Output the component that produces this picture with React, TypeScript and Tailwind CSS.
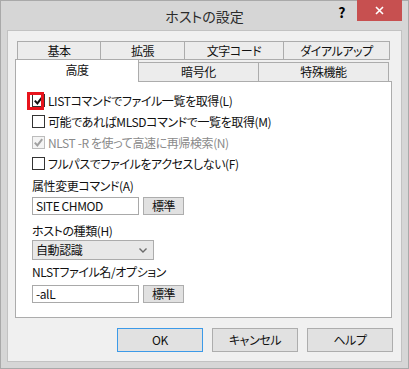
const tabRow1 = [
  { label: "基本", w: "w-[84px]" },
  { label: "拡張", w: "w-[84px]" },
  { label: "文字コード", w: "w-[99px]" },
  { label: "ダイアルアップ", w: "w-[106px]" },
];

function CheckMark({ color }: { color: string }) {
  return (
    <svg width="9" height="9" viewBox="0 0 9 9">
      <path d="M0.8 4.6 L3.4 7.4 L8.2 1.2" fill="none" stroke={color} strokeWidth="2" />
    </svg>
  );
}

interface CheckRowProps {
  label: string;
  checked?: boolean;
  disabled?: boolean;
  highlight?: boolean;
}

function CheckRow({ label, checked, disabled, highlight }: CheckRowProps) {
  return (
    <div className="flex h-[21px] items-center">
      <div
        className={`relative flex h-[13px] w-[13px] items-center justify-center border ${
          disabled ? "border-[#bcbcbc] bg-[#f4f4f4]" : "border-[#333333] bg-white"
        }`}
      >
        {checked && <CheckMark color={disabled ? "#a0a0a0" : "#111111"} />}
        {highlight && (
          <div className="absolute left-[-6px] top-[-3px] h-[18px] w-[17px] border-[3px] border-[#e8141c]" />
        )}
      </div>
      <span className={`ml-[3px] ${disabled ? "text-[#8a8a8a]" : "text-[#111111]"}`}>{label}</span>
    </div>
  );
}

function SmallButton({ label }: { label: string }) {
  return (
    <div className="ml-[4px] flex h-[18px] w-[41px] items-center justify-center border border-[#adadad] bg-[#e1e1e1]">
      {label}
    </div>
  );
}

function DialogButton({ label, primary = false }: { label: string; primary?: boolean }) {
  return (
    <div
      className={`flex h-[24px] w-[86px] items-center justify-center border bg-[#e1e1e1] ${
        primary ? "border-[#3c9ae8]" : "border-[#adadad]"
      }`}
    >
      {label}
    </div>
  );
}

export default function App() {
  return (
    <div className="relative flex h-[369px] w-[409px] flex-col border border-[#a9a9a9] bg-[#d6d6d6] font-['Noto_Sans_CJK_JP','Noto_Sans',sans-serif] text-[12px] leading-[16px] tracking-[-0.4px] text-[#111111] [font-feature-settings:'palt']">
      {/* title bar */}
      <div className="flex h-[29px] items-center justify-center text-[14px] tracking-normal text-[#2b2b2b]">
        ホストの設定
      </div>
      <div className="absolute right-[6px] top-[-1px] flex items-start">
        <span className="mr-[12px] mt-[4px] text-[14px] font-bold text-black">?</span>
        <div className="flex h-[21px] w-[45px] items-center justify-center bg-[#c75050]">
          <svg width="9" height="9" viewBox="0 0 9 9">
            <path d="M1 1 L8 8 M8 1 L1 8" stroke="#ffffff" strokeWidth="1.6" />
          </svg>
        </div>
      </div>

      {/* client area */}
      <div className="mx-[6px] flex h-[332px] flex-col border border-[#c2c2c2] bg-[#f0f0f0] pt-[10px]">
        <div className="ml-[9px] flex h-[19px]">
          {tabRow1.map((t, i) => (
            <div
              key={t.label}
              className={`flex ${t.w} items-center justify-center border-y border-r border-[#acacac] bg-[#ececec] ${
                i === 0 ? "border-l" : ""
              }`}
            >
              {t.label}
            </div>
          ))}
        </div>
        <div className="-mt-px flex h-[22px] items-end">
          <div className="relative z-10 -mb-px ml-[7px] flex h-[23px] w-[124px] justify-center border-x border-t border-[#acacac] bg-white pt-[2px]">
            高度
          </div>
          <div className="flex h-[19px] w-[120px] items-center justify-center border-r border-t border-[#acacac] bg-[#ececec]">
            暗号化
          </div>
          <div className="flex h-[19px] w-[130px] items-center justify-center border-r border-t border-[#acacac] bg-[#ececec]">
            特殊機能
          </div>
        </div>

        {/* tab page */}
        <div className="ml-[7px] flex h-[237px] w-[377px] flex-col border border-[#acacac] bg-white pl-[16px] pt-[8px]">
          <CheckRow label="LISTコマンドでファイル一覧を取得(L)" checked highlight />
          <CheckRow label="可能であればMLSDコマンドで一覧を取得(M)" />
          <CheckRow label="NLST -R を使って高速に再帰検索(N)" checked disabled />
          <CheckRow label="フルパスでファイルをアクセスしない(F)" />

          <div className="mt-[4px]">属性変更コマンド(A)</div>
          <div className="mt-[3px] flex">
            <div className="flex h-[18px] w-[107px] items-center border border-[#a9a9a9] px-[3px]">SITE CHMOD</div>
            <SmallButton label="標準" />
          </div>

          <div className="mt-[8px]">ホストの種類(H)</div>
          <div className="mt-[1px] flex h-[20px] w-[122px] items-center justify-between border border-[#acacac] bg-[#e8e8e8] pl-[3px] pr-[6px]">
            <span>自動認識</span>
            <svg width="8" height="5" viewBox="0 0 8 5">
              <path d="M0.5 0.5 L4 4 L7.5 0.5" fill="none" stroke="#6b6b6b" strokeWidth="1.4" />
            </svg>
          </div>

          <div className="mt-[4px]">NLSTファイル名/オプション</div>
          <div className="mt-[5px] flex">
            <div className="flex h-[18px] w-[107px] items-center border border-[#a9a9a9] px-[3px]">-alL</div>
            <SmallButton label="標準" />
          </div>
        </div>

        {/* buttons */}
        <div className="mr-[8px] mt-[10px] flex justify-end gap-[9px]">
          <DialogButton label="OK" primary />
          <DialogButton label="キャンセル" />
          <DialogButton label="ヘルプ" />
        </div>
      </div>
    </div>
  );
}
